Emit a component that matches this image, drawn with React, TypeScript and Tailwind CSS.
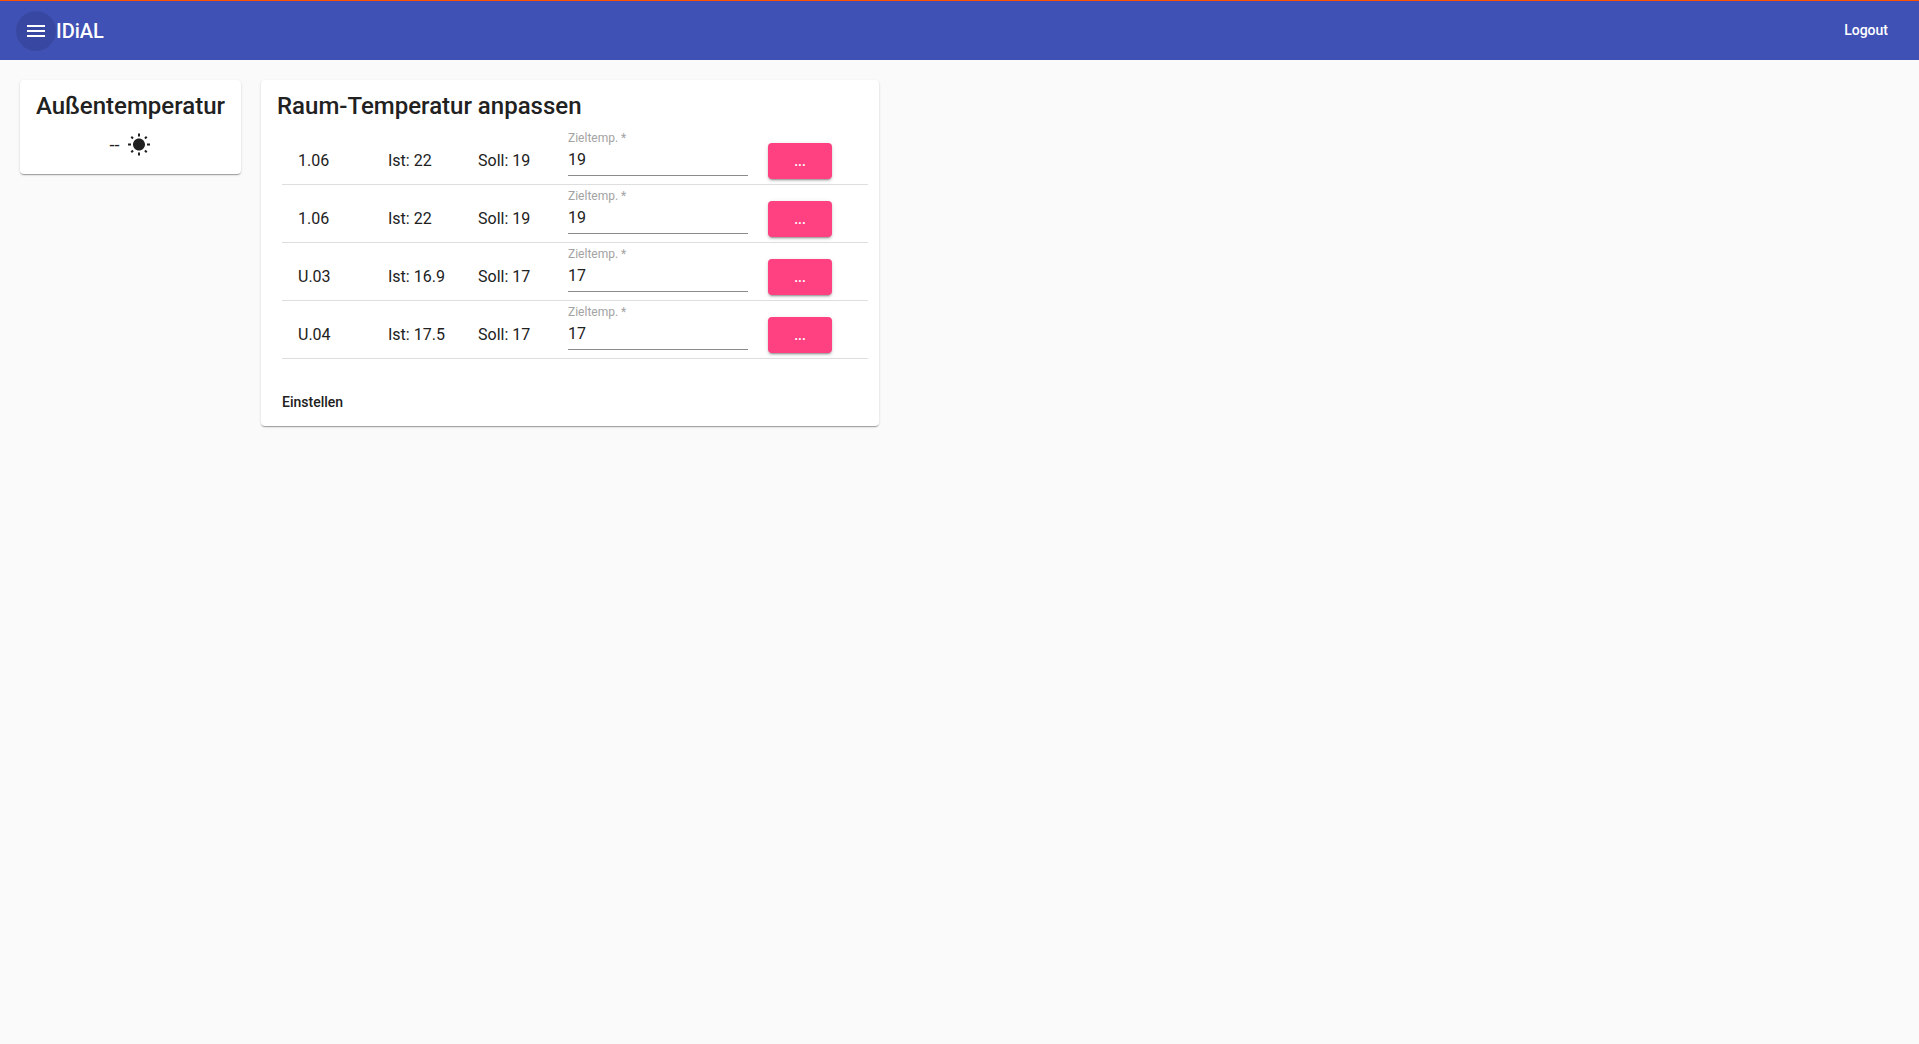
const rows = [
  { name: "1.06", ist: "Ist: 22", soll: "Soll: 19", val: "19" },
  { name: "1.06", ist: "Ist: 22", soll: "Soll: 19", val: "19" },
  { name: "U.03", ist: "Ist: 16.9", soll: "Soll: 17", val: "17" },
  { name: "U.04", ist: "Ist: 17.5", soll: "Soll: 17", val: "17" },
];

const cardShadow = "shadow-[0_2px_1px_-1px_rgba(0,0,0,0.2),0_1px_1px_0_rgba(0,0,0,0.14),0_1px_3px_0_rgba(0,0,0,0.12)]";

export default function App() {
  return (
    <div className="min-h-[1044px] bg-[#fafafa] text-[#212121] font-['Roboto',sans-serif]">
      <header className="h-[60px] bg-[#3f51b5] border-t border-[#ff5100] flex items-center pl-4 pr-[31px] text-white">
        <button className="w-10 h-10 rounded-full bg-black/10 flex items-center justify-center">
          <svg width="24" height="24" viewBox="0 0 24 24" fill="currentColor">
            <path d="M3 18h18v-2H3v2zm0-5h18v-2H3v2zm0-7v2h18V6H3z" />
          </svg>
        </button>
        <span className="text-[20px] font-medium leading-none">IDiAL</span>
        <span className="ml-auto text-[14px] font-medium">Logout</span>
      </header>
      <main className="flex items-start gap-5 pt-5 pl-5">
        <section className={`w-[221px] h-[94px] bg-white rounded ${cardShadow} flex flex-col items-center pt-[10px]`}>
          <h2 className="text-[24px] leading-[32px] font-medium whitespace-nowrap">Außentemperatur</h2>
          <div className="flex items-center mt-2 h-[30px]">
            <span className="text-[18px] mr-2 -mt-[2px]">--</span>
            <svg width="24" height="24" viewBox="0 0 24 24" fill="#212121">
              <path d="M6.76 4.84l-1.8-1.79-1.41 1.41 1.79 1.79 1.42-1.41zM4 10.5H1v2h3v-2zm9-9.95h-2V3.5h2V.55zm7.45 3.91l-1.41-1.41-1.79 1.79 1.41 1.41 1.79-1.79zm-3.21 13.7l1.79 1.8 1.41-1.41-1.8-1.79-1.4 1.4zM20 10.5v2h3v-2h-3zm-8-5c-3.31 0-6 2.69-6 6s2.69 6 6 6 6-2.69 6-6-2.69-6-6-6zm-1 16.95h2V19.5h-2v2.95zm-7.45-3.91l1.41 1.41 1.79-1.8-1.41-1.41-1.79 1.8z" />
            </svg>
          </div>
        </section>
        <section className={`w-[618px] h-[346px] bg-white rounded ${cardShadow} pt-[10px] pl-4 pr-[11px]`}>
          <h2 className="text-[24px] leading-[32px] font-medium whitespace-nowrap">Raum-Temperatur anpassen</h2>
          <div className="ml-[5px] mt-[5px]">
            {rows.map((r, i) => (
              <div key={i} className="h-[58px] border-b border-[#dedede] flex items-start pl-4 text-[16px]">
                <span className="w-[90px] mt-[22px] leading-6">{r.name}</span>
                <span className="w-[90px] mt-[22px] leading-6">{r.ist}</span>
                <span className="w-[90px] mt-[22px] leading-6">{r.soll}</span>
                <div className="w-[180px] h-[47px] mt-[2px] border-b border-[#8c8c8c] flex flex-col">
                  <span className="text-[12px] leading-[14px] text-[#a3a3a3] mt-[2px]">Zieltemp. *</span>
                  <span className="text-[16px] leading-[20px] mt-[5px]">{r.val}</span>
                </div>
                <button className="ml-5 mt-4 w-16 h-9 rounded bg-[#ff4081] text-white text-[14px] font-medium shadow-[0_3px_1px_-2px_rgba(0,0,0,0.2),0_2px_2px_0_rgba(0,0,0,0.14),0_1px_5px_0_rgba(0,0,0,0.12)]">
                  ...
                </button>
              </div>
            ))}
            <div className="mt-[33px] text-[14px] font-medium leading-[20px]">Einstellen</div>
          </div>
        </section>
      </main>
    </div>
  );
}
